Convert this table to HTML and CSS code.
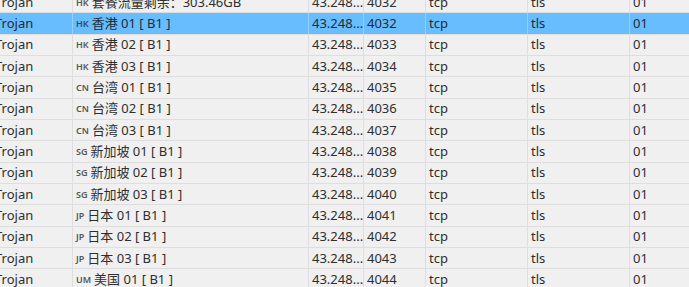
FILE: index.html
```html
<!DOCTYPE html>
<html>
<head>
<meta charset="utf-8">
<link rel="stylesheet" href="styles.css">
</head>
<body>
<div class="grid">
  <div class="row"><div class="c c0">Trojan</div><div class="c c1"><span class="fl">HK</span>套餐流量剩余：303.46GB</div><div class="c c2">43.248...</div><div class="c c3">4032</div><div class="c c4">tcp</div><div class="c c5">tls</div><div class="c c6">01</div></div>
  <div class="row sel"><div class="c c0">Trojan</div><div class="c c1"><span class="fl">HK</span>香港 01 [ B1 ]</div><div class="c c2">43.248...</div><div class="c c3">4032</div><div class="c c4">tcp</div><div class="c c5">tls</div><div class="c c6">01</div></div>
  <div class="row"><div class="c c0">Trojan</div><div class="c c1"><span class="fl">HK</span>香港 02 [ B1 ]</div><div class="c c2">43.248...</div><div class="c c3">4033</div><div class="c c4">tcp</div><div class="c c5">tls</div><div class="c c6">01</div></div>
  <div class="row"><div class="c c0">Trojan</div><div class="c c1"><span class="fl">HK</span>香港 03 [ B1 ]</div><div class="c c2">43.248...</div><div class="c c3">4034</div><div class="c c4">tcp</div><div class="c c5">tls</div><div class="c c6">01</div></div>
  <div class="row"><div class="c c0">Trojan</div><div class="c c1"><span class="fl">CN</span>台湾 01 [ B1 ]</div><div class="c c2">43.248...</div><div class="c c3">4035</div><div class="c c4">tcp</div><div class="c c5">tls</div><div class="c c6">01</div></div>
  <div class="row"><div class="c c0">Trojan</div><div class="c c1"><span class="fl">CN</span>台湾 02 [ B1 ]</div><div class="c c2">43.248...</div><div class="c c3">4036</div><div class="c c4">tcp</div><div class="c c5">tls</div><div class="c c6">01</div></div>
  <div class="row"><div class="c c0">Trojan</div><div class="c c1"><span class="fl">CN</span>台湾 03 [ B1 ]</div><div class="c c2">43.248...</div><div class="c c3">4037</div><div class="c c4">tcp</div><div class="c c5">tls</div><div class="c c6">01</div></div>
  <div class="row"><div class="c c0">Trojan</div><div class="c c1"><span class="fl">SG</span>新加坡 01 [ B1 ]</div><div class="c c2">43.248...</div><div class="c c3">4038</div><div class="c c4">tcp</div><div class="c c5">tls</div><div class="c c6">01</div></div>
  <div class="row"><div class="c c0">Trojan</div><div class="c c1"><span class="fl">SG</span>新加坡 02 [ B1 ]</div><div class="c c2">43.248...</div><div class="c c3">4039</div><div class="c c4">tcp</div><div class="c c5">tls</div><div class="c c6">01</div></div>
  <div class="row"><div class="c c0">Trojan</div><div class="c c1"><span class="fl">SG</span>新加坡 03 [ B1 ]</div><div class="c c2">43.248...</div><div class="c c3">4040</div><div class="c c4">tcp</div><div class="c c5">tls</div><div class="c c6">01</div></div>
  <div class="row"><div class="c c0">Trojan</div><div class="c c1"><span class="fl">JP</span>日本 01 [ B1 ]</div><div class="c c2">43.248...</div><div class="c c3">4041</div><div class="c c4">tcp</div><div class="c c5">tls</div><div class="c c6">01</div></div>
  <div class="row"><div class="c c0">Trojan</div><div class="c c1"><span class="fl">JP</span>日本 02 [ B1 ]</div><div class="c c2">43.248...</div><div class="c c3">4042</div><div class="c c4">tcp</div><div class="c c5">tls</div><div class="c c6">01</div></div>
  <div class="row"><div class="c c0">Trojan</div><div class="c c1"><span class="fl">JP</span>日本 03 [ B1 ]</div><div class="c c2">43.248...</div><div class="c c3">4043</div><div class="c c4">tcp</div><div class="c c5">tls</div><div class="c c6">01</div></div>
  <div class="row"><div class="c c0">Trojan</div><div class="c c1"><span class="fl">UM</span>美国 01 [ B1 ]</div><div class="c c2">43.248...</div><div class="c c3">4044</div><div class="c c4">tcp</div><div class="c c5">tls</div><div class="c c6">01</div></div>
</div>
</body>
</html>
```
FILE: styles.css
```css
html, body {
  margin: 0;
  padding: 0;
  background: #f0f0f0;
  overflow: hidden;
}
body {
  width: 689px;
  height: 287px;
  font-family: "Noto Sans", "Noto Sans CJK SC", sans-serif;
  font-size: 13px;
  color: #2e2e2e;
}
.grid {
  margin-top: -8px;
  margin-left: -8px;
  display: flex;
  flex-direction: column;
}
.row {
  display: grid;
  grid-template-columns: 81px 236px 55px 62px 102px 102px 70px;
  height: 21.333px;
  box-sizing: border-box;
  border-bottom: 1px solid #dedede;
}
.row.sel {
  background: #68bdff;
  color: #1e2a36;
}
.c {
  display: flex;
  align-items: center;
  padding-left: 3px;
  border-right: 1px solid #dedede;
  white-space: nowrap;
  overflow: hidden;
  line-height: 1;
}
.sel .c { border-right-color: #92d0ff; }
.c6 { border-right: none; }
.fl {
  font-size: 9px;
  font-weight: 600;
  margin-right: 3px;
  color: #555;
}
.sel .fl { color: #2d4a66; }
```
